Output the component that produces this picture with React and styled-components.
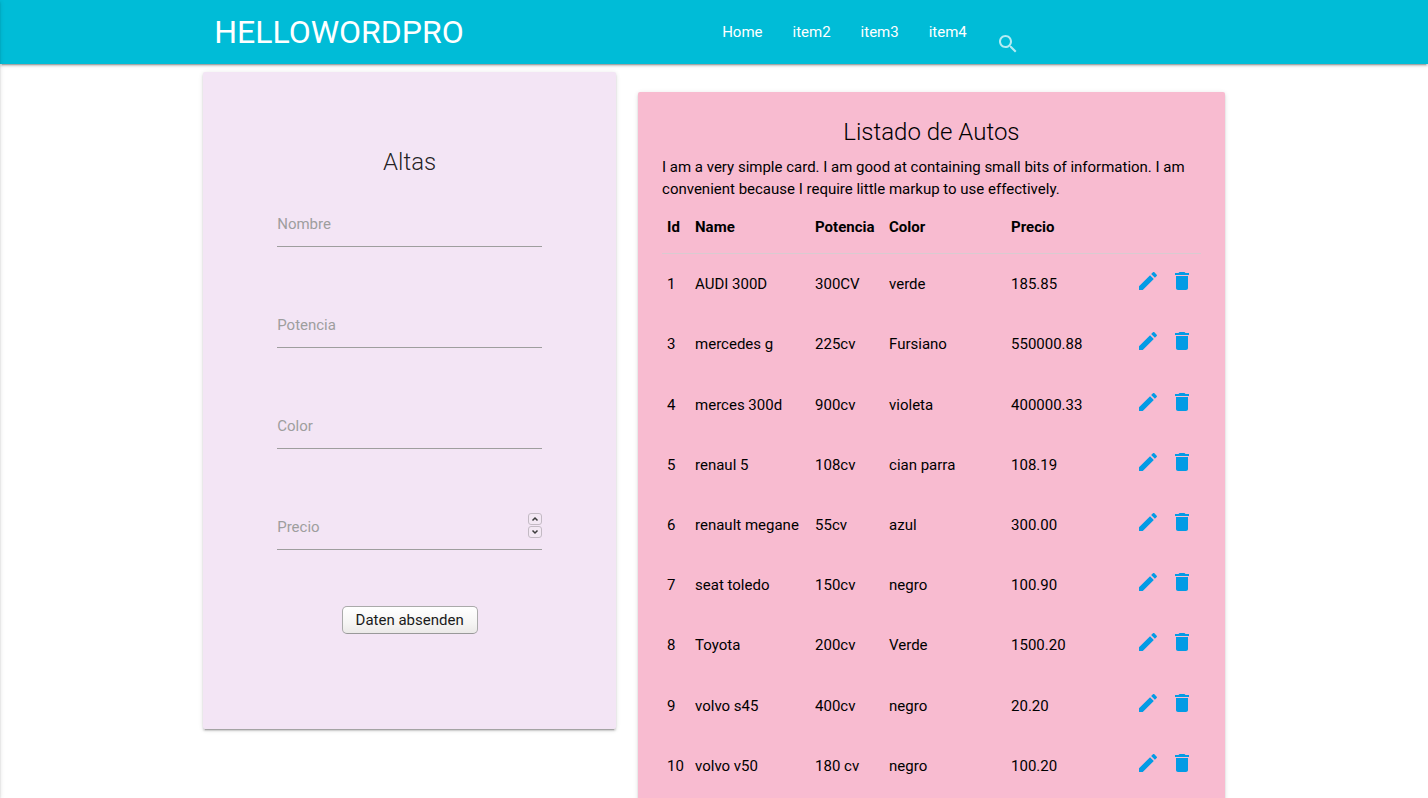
import React from "react";
import styled, { createGlobalStyle } from "styled-components";

const GlobalStyle = createGlobalStyle`
  *, *::before, *::after { box-sizing: border-box; }
  body {
    margin: 0;
    background: #fff;
    color: rgba(0, 0, 0, 0.87);
    font-family: Roboto, "Liberation Sans", sans-serif;
    font-size: 15px;
    line-height: 22px;
  }
`;

const depth = `
  box-shadow: 0 2px 2px 0 rgba(0, 0, 0, 0.14), 0 1px 5px 0 rgba(0, 0, 0, 0.12),
    0 3px 1px -2px rgba(0, 0, 0, 0.2);
`;

const SideDrawer = styled.aside`
  position: fixed;
  top: 0;
  bottom: 0;
  left: -300px;
  width: 300px;
  z-index: 2;
  background: #fff;
  ${depth}
`;

const Header = styled.header`
  background: #00bcd7;
  ${depth}
`;

const HeaderInner = styled.div`
  display: flex;
  width: 70%;
  height: 64px;
  margin: 0 auto;
`;

const Logo = styled.a`
  margin-right: auto;
  color: #fff;
  font-size: 32px;
  line-height: 64px;
  text-decoration: none;
`;

const Menu = styled.nav`
  display: flex;
`;

const MenuLink = styled.a`
  padding: 0 15px;
  color: #fff;
  line-height: 64px;
  text-decoration: none;
`;

const SearchForm = styled.form`
  display: flex;
  align-items: center;
  width: 232px;
  padding: 24px 0 0 14px;
`;

const SearchLabel = styled.label`
  display: flex;
  color: rgba(255, 255, 255, 0.7);
`;

const SearchInput = styled.input`
  flex: 1;
  min-width: 0;
  height: 24px;
  padding: 0 8px;
  border: 0;
  outline: 0;
  background: transparent;
  color: #fff;
  font: inherit;
`;

const Content = styled.main`
  display: grid;
  grid-template-columns: minmax(0, 413fr) minmax(0, 587fr);
  align-items: start;
  gap: 22px;
  width: calc(70% + 22px);
  margin: 0 auto;
  padding-bottom: 8px;
`;

const Card = styled.section`
  border-radius: 2px;
  ${depth}
`;

const FormCard = styled(Card)`
  margin-top: 8px;
  padding: 74px 74px 95px;
  background: #f3e5f5;
`;

const ListCard = styled(Card)`
  margin-top: 28px;
  padding: 24px;
  background: #f8bbd0;
  color: #000;
`;

const CardTitle = styled.h2`
  margin: 0 0 ${(p) => p.$space}px;
  font-size: 24px;
  font-weight: 300;
  line-height: 32px;
  text-align: center;
`;

const CarForm = styled.form`
  display: flex;
  flex-direction: column;
  gap: 56px;
`;

const Field = styled.div`
  display: grid;
  align-items: center;
  & > * { grid-area: 1 / 1; }
`;

const FieldLabel = styled.label`
  padding-bottom: 2px;
  color: #9e9e9e;
  pointer-events: none;
`;

const FieldInput = styled.input`
  width: 100%;
  height: 45px;
  padding: 0;
  border: 0;
  border-bottom: 1px solid #9e9e9e;
  border-radius: 0;
  outline: 0;
  background: transparent;
  font: inherit;
  appearance: textfield;
  &::-webkit-inner-spin-button { appearance: none; }
`;

const Stepper = styled.div`
  display: flex;
  flex-direction: column;
  justify-self: end;
  gap: 1px;
  padding-bottom: 4px;
`;

const StepButton = styled.button`
  display: flex;
  align-items: center;
  justify-content: center;
  width: 14px;
  height: 12px;
  padding: 0;
  border: 1px solid #c3bac4;
  border-radius: 3px;
  background: #f3e8f4;
  color: #3c3c3c;
`;

const Submit = styled.button`
  align-self: center;
  height: 28px;
  padding: 0 13px;
  border: 1px solid #aaa;
  border-bottom-color: #999;
  border-radius: 5px;
  background: linear-gradient(#fff, #f6f5f4 60%, #ebe9e8);
  color: #1a1a1a;
  font: inherit;
`;

const Intro = styled.p`
  margin: 0;
`;

const CarTable = styled.table`
  width: 100%;
  height: 596px;
  border-spacing: 0;
  table-layout: fixed;
  text-align: left;
`;

const HeadCell = styled.th`
  height: 54px;
  padding: 0 0 0 5px;
  border-bottom: 1px solid #d9cbd0;
  font-weight: 700;
`;

const Cell = styled.td`
  padding: 15px 0 15px 5px;
  white-space: nowrap;
`;

const ActionLink = styled.a`
  display: block;
  height: 30px;
  color: #039be5;
`;

const IconSvg = styled.svg`
  display: block;
  fill: currentColor;
`;

const Icon = ({ d }) => (
  <IconSvg width="24" height="24" viewBox="0 0 24 24" aria-hidden="true">
    <path d={d} />
  </IconSvg>
);

const Chevron = ({ d }) => (
  <svg width="8" height="6" viewBox="0 0 8 6" fill="none" stroke="currentColor" strokeWidth="1.5" aria-hidden="true">
    <path d={d} />
  </svg>
);

const searchPath =
  "M15.5 14h-.79l-.28-.27C15.41 12.59 16 11.11 16 9.5 16 5.91 13.09 3 9.5 3S3 5.91 3 9.5 5.91 16 9.5 16c1.61 0 3.09-.59 4.23-1.57l.27.28v.79l5 4.99L20.49 19l-4.99-5zm-6 0C7.01 14 5 11.99 5 9.5S7.01 5 9.5 5 14 7.01 14 9.5 11.99 14 9.5 14z";
const editPath =
  "M3 17.25V21h3.75L17.81 9.94l-3.75-3.75L3 17.25zM20.71 7.04c.39-.39.39-1.02 0-1.41l-2.34-2.34c-.39-.39-1.02-.39-1.41 0l-1.83 1.83 3.75 3.75 1.83-1.83z";
const deletePath = "M6 19c0 1.1.9 2 2 2h8c1.1 0 2-.9 2-2V7H6v12zM19 4h-3.5l-1-1h-5l-1 1H5v2h14V4z";

const menu = ["Home", "item2", "item3", "item4"];

const fields = [
  { id: "nombre", label: "Nombre", type: "text" },
  { id: "potencia", label: "Potencia", type: "text" },
  { id: "color", label: "Color", type: "text" },
  { id: "precio", label: "Precio", type: "number" },
];

const columns = [28, 120, 74, 122, 125, 34, 36];

const cars = [
  [1, "AUDI 300D", "300CV", "verde", "185.85"],
  [3, "mercedes g", "225cv", "Fursiano", "550000.88"],
  [4, "merces 300d", "900cv", "violeta", "400000.33"],
  [5, "renaul 5", "108cv", "cian parra", "108.19"],
  [6, "renault megane", "55cv", "azul", "300.00"],
  [7, "seat toledo", "150cv", "negro", "100.90"],
  [8, "Toyota", "200cv", "Verde", "1500.20"],
  [9, "volvo s45", "400cv", "negro", "20.20"],
  [10, "volvo v50", "180 cv", "negro", "100.20"],
];

export default function App() {
  return (
    <>
      <GlobalStyle />
      <SideDrawer />
      <Header>
        <HeaderInner>
          <Logo href="#">HELLOWORDPRO</Logo>
          <Menu>
            {menu.map((item) => (
              <MenuLink href="#" key={item}>{item}</MenuLink>
            ))}
          </Menu>
          <SearchForm role="search">
            <SearchLabel htmlFor="search" aria-label="Search">
              <Icon d={searchPath} />
            </SearchLabel>
            <SearchInput id="search" type="search" />
          </SearchForm>
        </HeaderInner>
      </Header>
      <Content>
        <FormCard>
          <CardTitle $space={24}>Altas</CardTitle>
          <CarForm>
            {fields.map((f) => (
              <Field key={f.id}>
                <FieldInput id={f.id} type={f.type} />
                <FieldLabel htmlFor={f.id}>{f.label}</FieldLabel>
                {f.type === "number" && (
                  <Stepper>
                    <StepButton type="button" aria-label="Increase">
                      <Chevron d="M1.5 4.5 4 2l2.5 2.5" />
                    </StepButton>
                    <StepButton type="button" aria-label="Decrease">
                      <Chevron d="M1.5 1.5 4 4l2.5-2.5" />
                    </StepButton>
                  </Stepper>
                )}
              </Field>
            ))}
            <Submit type="submit">Daten absenden</Submit>
          </CarForm>
        </FormCard>
        <ListCard>
          <CardTitle $space={8}>Listado de Autos</CardTitle>
          <Intro>
            I am a very simple card. I am good at containing small bits of information. I am
            convenient because I require little markup to use effectively.
          </Intro>
          <CarTable>
            <colgroup>
              {columns.map((w, i) => (
                <col key={i} width={w} />
              ))}
            </colgroup>
            <thead>
              <tr>
                <HeadCell>Id</HeadCell>
                <HeadCell>Name</HeadCell>
                <HeadCell>Potencia</HeadCell>
                <HeadCell>Color</HeadCell>
                <HeadCell>Precio</HeadCell>
                <HeadCell />
                <HeadCell />
              </tr>
            </thead>
            <tbody>
              {cars.map((car) => (
                <tr key={car[0]}>
                  {car.map((value, i) => (
                    <Cell key={i}>{value}</Cell>
                  ))}
                  <Cell>
                    <ActionLink href="#" aria-label="Edit"><Icon d={editPath} /></ActionLink>
                  </Cell>
                  <Cell>
                    <ActionLink href="#" aria-label="Delete"><Icon d={deletePath} /></ActionLink>
                  </Cell>
                </tr>
              ))}
            </tbody>
          </CarTable>
        </ListCard>
      </Content>
    </>
  );
}
